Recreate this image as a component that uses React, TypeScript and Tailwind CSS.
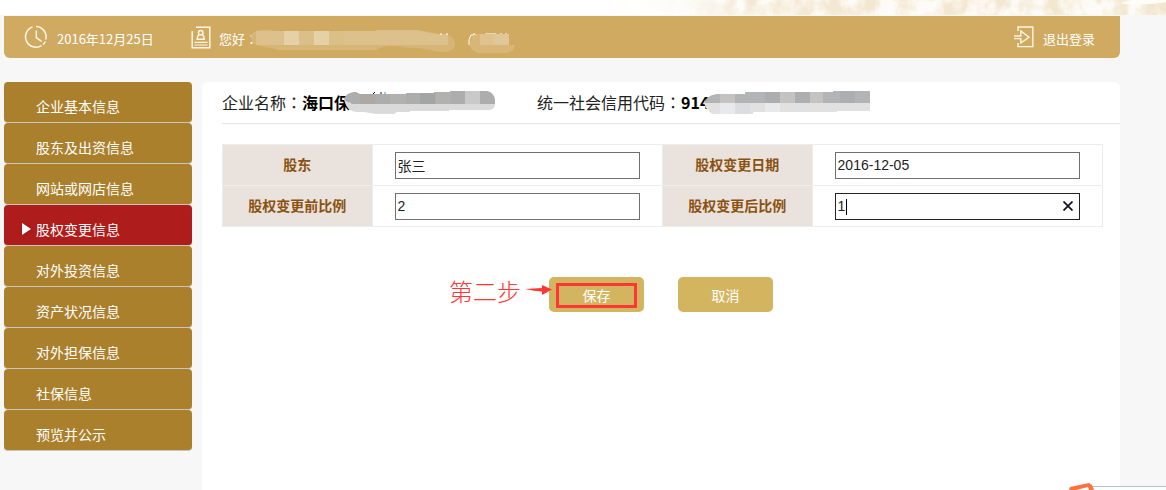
import React, { useState } from 'react';
import clsx from 'clsx';

const MENU_ITEMS = [
    '企业基本信息',
    '股东及出资信息',
    '网站或网店信息',
    '股权变更信息',
    '对外投资信息',
    '资产状况信息',
    '对外担保信息',
    '社保信息',
    '预览并公示',
];

const ClockIcon = () => (
    <svg width="24" height="24" viewBox="0 0 24 24" fill="none" stroke="#fdf6e6" strokeWidth="1.5">
        <path d="M8.5 2A10.4 10.4 0 1 0 17.5 20.6" />
        <path d="M12 1.6A10.4 10.4 0 0 1 21.8 14.6" />
        <path d="M21.4 16.5A10.4 10.4 0 0 1 19 19.6" />
        <path d="M12.3 5.5V12.6L17.6 16.4" />
    </svg>
);

const BadgeIcon = () => (
    <svg width="20" height="23" viewBox="0 0 20 23" fill="none" stroke="#fdf6e6" strokeWidth="1.5">
        <path d="M5 1.2H18.8V21.8H1.2V5" />
        <circle cx="9.7" cy="6.8" r="2.3" />
        <path d="M8 8.6C6.4 9.8 6.2 11 6.2 13.2H13.2C13.2 11 13 9.8 11.4 8.6" />
        <path d="M3.5 16.3H16.5M3.5 19H16.5" strokeWidth="1.2" />
    </svg>
);

const ExitIcon = () => (
    <svg width="20" height="22" viewBox="0 0 20 22" fill="none" stroke="#fdf6e6" strokeWidth="1.4">
        <path d="M4 5V1H18.8V20.6H4V17" />
        <path d="M0 10H6.8V5L15 11.2L6.8 17V12.6H0" />
    </svg>
);

// Full-width colon, set in the face that centres it
const Colon = () => <span className="font-['Noto_Sans_CJK_TC',sans-serif]">：</span>;

// Faint engraved mountains at the bottom edge of the banner
const Banner = () => (
    <div className="flex h-[15px] justify-end overflow-hidden bg-white">
        <svg className="h-full w-[49%]" viewBox="0 0 572 15" preserveAspectRatio="xMaxYMin slice">
            <defs>
                <linearGradient id="fade" x1="0" x2="1" y1="0" y2="0">
                    <stop offset="0" stopColor="#fff" stopOpacity="0" />
                    <stop offset="0.25" stopColor="#f3e8d2" />
                    <stop offset="1" stopColor="#f2e6cd" />
                </linearGradient>
                <filter id="rock" x="0" y="0" width="100%" height="100%">
                    <feTurbulence type="fractalNoise" baseFrequency="0.06 0.05" numOctaves="5" seed="8" />
                    <feColorMatrix values="0 0 0 0 1  0 0 0 0 0.99  0 0 0 0 0.97  3 0 0 0 -0.95" />
                </filter>
            </defs>
            <path d="M20 0L36 6L58 9L70 15H572V0Z" fill="url(#fade)" />
            <rect x="20" width="552" height="15" filter="url(#rock)" opacity="0.9" />
            <path d="M526 3C538 6 562 4 572 2V0H540Z" fill="#fffdf8" />
        </svg>
    </div>
);

const HeaderMask = () => (
    <svg className="-ml-2" width="206" height="26" viewBox="0 0 206 26">
        <path d="M4 4C10 1 20 1 24 3H126V2H166C178 3 186 6 198 7C208 11 208 22 196 24H188C180 22 176 20 160 20C150 18 140 17 132 19L126 22H28C18 18 10 20 3 15C0 11 0 7 4 4Z" fill="#d7b577" />
        <path d="M6 3H126V2H166L186 6H198V17H6Z" fill="#dcc18c" />
        <path d="M34 3H49V17H34ZM64 3H79V17H64Z" fill="#e6d0a5" />
        <path d="M49 3H64V17H49ZM79 3H94V17H79Z" fill="#dbbf88" />
        <path d="M191 5V7M197 5V7" stroke="#fff" />
    </svg>
);

const RoleMask = () => (
    <svg width="48" height="26" viewBox="0 0 48 26">
        <path d="M1 17V12L3 7H9M6 5V7M17 6H28M33 5V7M38 5V7" stroke="#fff" fill="none" />
        <path d="M4 9C6 6 10 6 14 6H41V17H47C46 23 42 25 36 25H11C4 24 1 19 2 15Z" fill="#d8b677" />
        <path d="M12 6H41V17H12Z" fill="#dec38e" />
        <path d="M26 6H41V17H26Z" fill="#e0c797" />
    </svg>
);

const NameMask = () => (
    <svg className="-ml-1.5" width="152" height="24" viewBox="0 0 152 24">
        <path d="M31 2L29 4M37 2V4" stroke="#111" />
        <path d="M41 2V4" stroke="#3b8fe0" />
        <path d="M0 9L8 14H151C151 18 148 20 144 20H105V21H66V22H53L50 24H33C26 23 23 22 14 22C6 22 2 18 0 9Z" fill="#dadada" />
        <path d="M0 9C2 4 6 2 12 2L16 4H62V3H90V2H106V1H143C148 2 151 6 151 10V14H8Z" fill="#adadae" />
        <path d="M16 4H31V14H16Z" fill="#ada8a3" />
        <path d="M46 4H62V14H46ZM92 2H107V14H92Z" fill="#b1b1af" />
        <path d="M76 3H91V14H76Z" fill="#a2a5a4" />
        <path d="M121 1H136V14H121Z" fill="#c9c9ca" />
    </svg>
);

const CodeMask = () => (
    <svg className="-ml-1.5" width="168" height="24" viewBox="0 0 168 24">
        <path d="M1 13H167V21H134V22H50V24H9L3 18Z" fill="#e1e1e2" />
        <path d="M1 13C4 7 7 5 14 4H42V2H130V1H167V13Z" fill="#b3b4b5" />
        <path d="M17 4H32V13H17ZM77 2H92V13H77ZM107 2H120V13H107Z" fill="#c4c3c2" />
        <path d="M62 2H77V13H62ZM92 2H107V13H92ZM137 1H152V13H137Z" fill="#adaeb0" />
        <path d="M17 13H32V24H17ZM62 13H77V22H62Z" fill="#e8e9ea" />
        <path d="M32 13H47V24H32Z" fill="#dcdde1" />
    </svg>
);

const Sidebar = () => (
    <nav className="w-[188px] shrink-0">
        <ul>
            {MENU_ITEMS.map((item, i) => (
                <li key={item}>
                    <a
                        href="#"
                        className={clsx(
                            'flex h-[41px] items-center rounded border-b border-[#cbc5bb] pt-2 text-sm text-white',
                            i === 3 ? 'bg-[#ae1c1c]' : 'bg-[#ab802c]'
                        )}
                    >
                        <span className="flex w-8 justify-center pl-3">
                            {i === 3 && (
                                <svg width="9" height="12" viewBox="0 0 9 12" className="drop-shadow-sm">
                                    <path d="M0 0L9 6L0 12Z" fill="#fff" />
                                </svg>
                            )}
                        </span>
                        {item}
                    </a>
                </li>
            ))}
        </ul>
    </nav>
);

type FieldProps = {
    id: string;
    label: string;
    value: string;
    onChange: (value: string) => void;
    active?: boolean;
};

const Field = ({ id, label, value, onChange, active }: FieldProps) => (
    <>
        <th className="h-[41px] w-[17%] border border-[#ededed] bg-[#eae2dd] text-sm font-bold text-[#8a5210]">
            <label htmlFor={id}>{label}</label>
        </th>
        <td className="w-[33%] border border-[#ededed] px-[22px]">
            <div className="relative flex">
                <input
                    id={id}
                    type="text"
                    value={value}
                    onChange={e => onChange(e.target.value)}
                    className={clsx(
                        'h-[27px] w-full border bg-white px-0.5 text-sm text-[#222] outline-none',
                        active ? 'border-[#222]' : 'border-[#707070]'
                    )}
                />
                {active && (
                    <>
                        <span className="absolute top-1.5 left-[11px] h-4 w-px bg-black" />
                        <button
                            type="button"
                            aria-label="清除"
                            onClick={() => onChange('')}
                            className="absolute top-0 right-0 flex h-[27px] w-6 items-center justify-center"
                        >
                            <svg width="10" height="10" viewBox="0 0 10 10" stroke="#15152b" strokeWidth="1.8">
                                <path d="M0.5 0.5L9.5 9.5M9.5 0.5L0.5 9.5" />
                            </svg>
                        </button>
                    </>
                )}
            </div>
        </td>
    </>
);

const ChangeForm = () => {
    const [form, setForm] = useState({
        holder: '张三',
        date: '2016-12-05',
        before: '2',
        after: '1',
    });

    const update = (key: string) => (value: string) => setForm(prev => ({ ...prev, [key]: value }));

    return (
        <form className="pt-5 pr-[17px] pl-5" onSubmit={e => e.preventDefault()}>
            <table className="w-full table-fixed border-collapse font-['Liberation_Sans','Noto_Sans_CJK_SC',sans-serif]">
                <tbody>
                    <tr>
                        <Field id="holder" label="股东" value={form.holder} onChange={update('holder')} />
                        <Field id="date" label="股权变更日期" value={form.date} onChange={update('date')} />
                    </tr>
                    <tr>
                        <Field id="before" label="股权变更前比例" value={form.before} onChange={update('before')} />
                        <Field id="after" label="股权变更后比例" value={form.after} onChange={update('after')} active />
                    </tr>
                </tbody>
            </table>
            <div className="mt-[50px] flex justify-center gap-[34px] pr-[3px] text-sm text-white">
                <div className="relative">
                    <button type="submit" className="h-[35px] w-[95px] rounded-[5px] bg-[#d4b55f]">
                        保存
                    </button>
                    <div className="pointer-events-none absolute inset-x-[7px] top-1.5 bottom-1 border-3 border-[#ff3636]" />
                    <div className="absolute top-0 right-[92px] flex items-center gap-1">
                        <span className="text-2xl leading-7 font-light whitespace-nowrap text-[#ff3636]">第二步</span>
                        <svg width="27" height="12" viewBox="0 0 27 12" fill="#ff3636">
                            <path d="M0 4L17 3V0L27 4.5L17 10V6.6L9 5.8Z" />
                        </svg>
                    </div>
                </div>
                <button type="button" className="h-[35px] w-[95px] rounded-[5px] bg-[#d4b55f]">
                    取消
                </button>
            </div>
        </form>
    );
};

// Corner of the notification window that peeks in from below
const Popup = () => (
    <div className="fixed right-0 bottom-0">
        <svg className="block" width="98" height="7" viewBox="0 0 98 7">
            <path d="M22 3H98V7H22Z" fill="#fff" />
            <path d="M24 3.5H98" stroke="#b4c3d0" />
            <path d="M1 7L2 4L21 0L24 2L26 7H21L20 4L8 7Z" fill="#f8733f" />
        </svg>
    </div>
);

const App = () => {
    return (
        <div className="flex min-h-screen flex-col bg-[#f7f7f7] font-['Noto_Sans_CJK_SC',sans-serif]">
            <Banner />
            <div className="mt-px flex flex-1 flex-col pr-[46px] pl-1">
                <header className="flex h-[42px] items-center rounded-b-md bg-[#d0aa60] pr-[25px] pl-5 text-[13px] text-white">
                    <ClockIcon />
                    <span className="w-[143px] shrink-0 pt-1 pl-[9px]">2016年12月25日</span>
                    <BadgeIcon />
                    <span className="pt-1 pl-2">
                        您好
                        <Colon />
                    </span>
                    <div className="flex flex-1 items-center gap-3 pt-2">
                        <HeaderMask />
                        <RoleMask />
                    </div>
                    <a href="#" className="flex items-center gap-[9px]">
                        <ExitIcon />
                        <span className="pt-1">退出登录</span>
                    </a>
                </header>
                <div className="mt-6 flex flex-1 gap-2.5">
                    <Sidebar />
                    <main className="min-w-0 flex-1 rounded-t-md bg-white">
                        <div className="ml-5 flex h-[42px] items-center border-b border-[#e5e5e5] pb-0.5 text-base whitespace-nowrap text-[#222]">
                            <p className="flex w-[315px] items-center">
                                企业名称
                                <Colon />
                                <strong className="text-black">海口保</strong>
                                <NameMask />
                            </p>
                            <p className="flex items-center">
                                统一社会信用代码
                                <Colon />
                                <strong className="text-black">914</strong>
                                <CodeMask />
                            </p>
                        </div>
                        <ChangeForm />
                    </main>
                </div>
            </div>
            <Popup />
        </div>
    );
};

export default App;
